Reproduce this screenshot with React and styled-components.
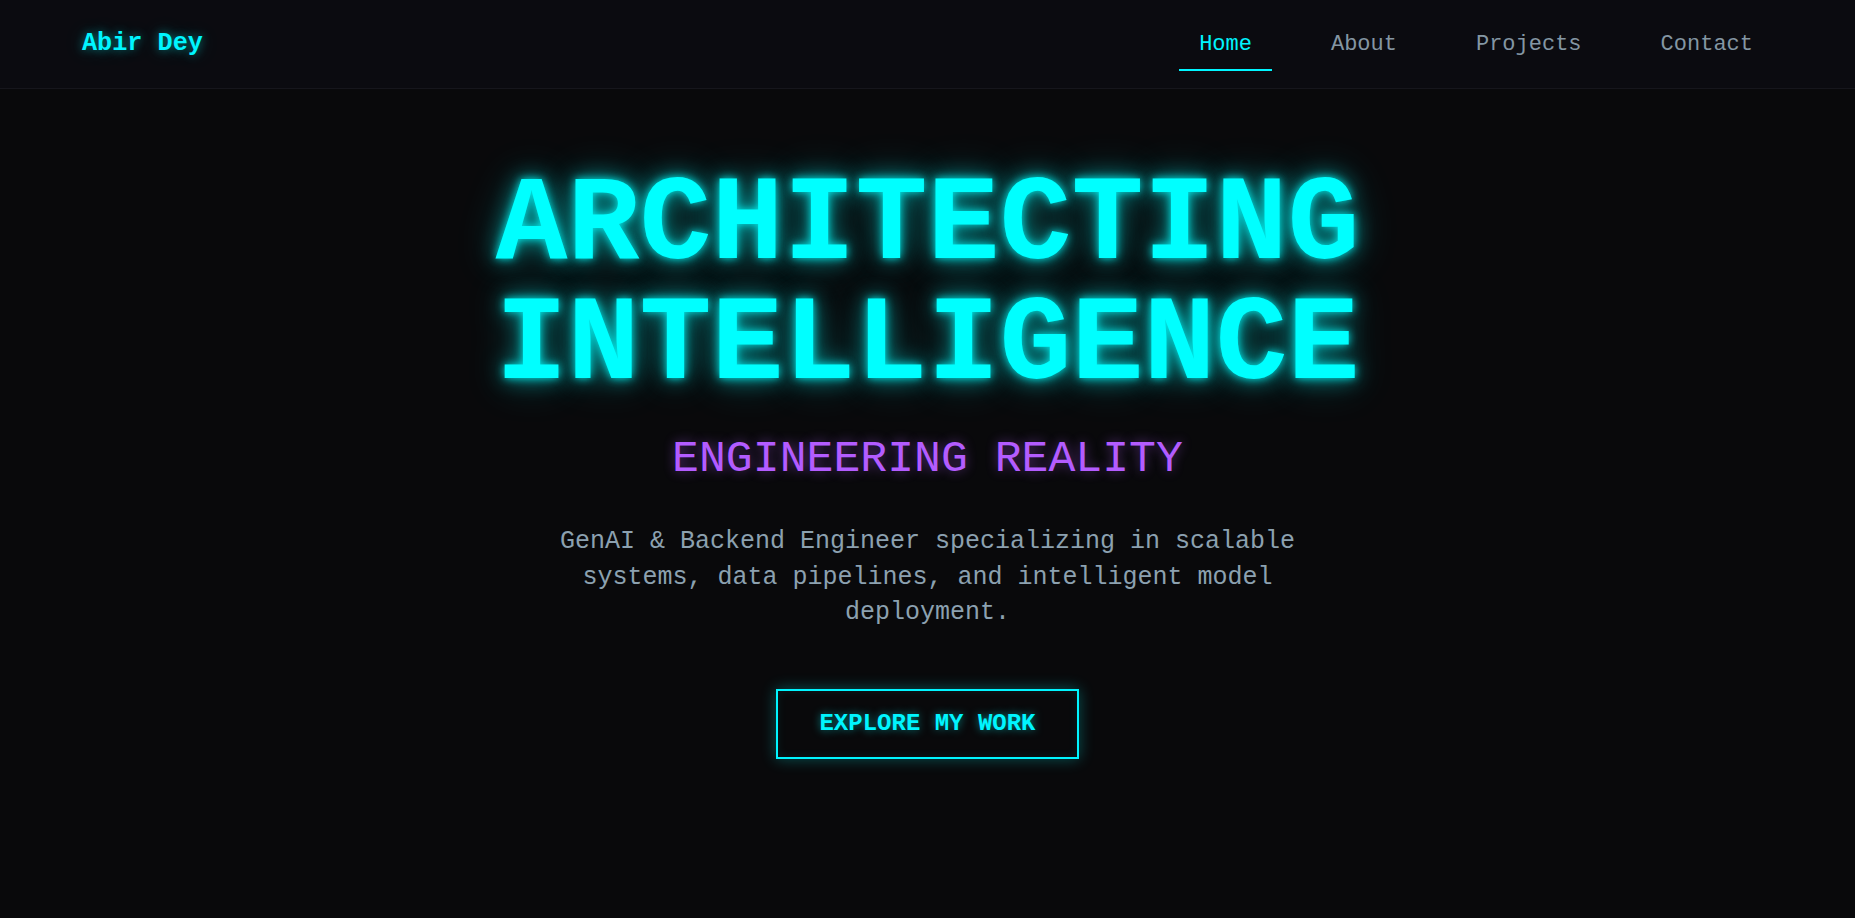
import styled, { createGlobalStyle } from "styled-components";

const GlobalStyle = createGlobalStyle`
    * { box-sizing: border-box; }
    html, body {
        margin: 0;
        padding: 0;
        background: #09090b;
    }
    body {
        font-family: "Liberation Mono", "DejaVu Sans Mono", monospace;
        color: #8b9eab;
        min-height: 100vh;
    }
`;

const Page = styled.div`
    min-height: 100vh;
    background: #09090b;
`;

const Nav = styled.nav`
    height: 89px;
    display: flex;
    align-items: center;
    justify-content: space-between;
    padding: 0 82px 0 82px;
    background: #0b0b10;
    border-bottom: 1px solid #16161c;
`;

const Logo = styled.div`
    font-size: 25.2px;
    font-weight: 700;
    color: #00f5ff;
    text-shadow: 0 0 10px rgba(0, 255, 255, 0.45), 0 0 22px rgba(0, 255, 255, 0.2);
    margin-top: -1px;
`;

const Links = styled.ul`
    display: flex;
    gap: 39px;
    list-style: none;
    margin: 0;
    padding: 0;
`;

const NavLink = styled.li`
    font-size: 22px;
    line-height: 25px;
    padding: 12px 20px;
    color: ${(p) => (p.$active ? "#00f5ff" : "#8496a3")};
    border-bottom: 2px solid ${(p) => (p.$active ? "#00f5ff" : "transparent")};
    cursor: pointer;
    margin-top: 3px;
`;

const Hero = styled.section`
    display: flex;
    flex-direction: column;
    align-items: center;
    text-align: center;
    padding-top: 77px;
`;

const Title = styled.h1`
    margin: 0;
    font-size: 120px;
    line-height: 1;
    font-weight: 700;
    color: #00ffff;
    text-shadow:
        0 0 8px rgba(0, 255, 255, 0.85),
        0 0 22px rgba(0, 255, 255, 0.55),
        0 0 44px rgba(0, 255, 255, 0.3);
`;

const Subtitle = styled.h2`
    margin: 28px 0 0;
    font-size: 44.8px;
    font-weight: 400;
    line-height: normal;
    color: #b35cff;
    text-shadow: 0 0 12px rgba(179, 92, 255, 0.45);
`;

const Desc = styled.p`
    margin: 40px 0 0;
    max-width: 820px;
    font-size: 25px;
    line-height: 35.5px;
    color: #8ca1b0;
`;

const Button = styled.button`
    margin-top: 58px;
    padding: 21px 41px;
    font-family: inherit;
    font-size: 24px;
    line-height: 24px;
    font-weight: 700;
    color: #00f5ff;
    background: #09090b;
    border: 2px solid #00f5ff;
    cursor: pointer;
    text-shadow: 0 0 8px rgba(0, 255, 255, 0.5);
    box-shadow: 0 0 14px rgba(0, 255, 255, 0.3), inset 0 0 10px rgba(0, 255, 255, 0.08);
`;

const links = ["Home", "About", "Projects", "Contact"];

const App = () => {
    return (
        <Page>
            <GlobalStyle />
            <Nav>
                <Logo>Abir Dey</Logo>
                <Links>
                    {links.map((l, i) => (
                        <NavLink key={l} $active={i === 0}>{l}</NavLink>
                    ))}
                </Links>
            </Nav>
            <Hero>
                <Title>
                    ARCHITECTING
                    <br />
                    INTELLIGENCE
                </Title>
                <Subtitle>ENGINEERING REALITY</Subtitle>
                <Desc>
                    GenAI &amp; Backend Engineer specializing in scalable systems, data pipelines, and intelligent model deployment.
                </Desc>
                <Button>EXPLORE MY WORK</Button>
            </Hero>
        </Page>
    );
};

export default App;
